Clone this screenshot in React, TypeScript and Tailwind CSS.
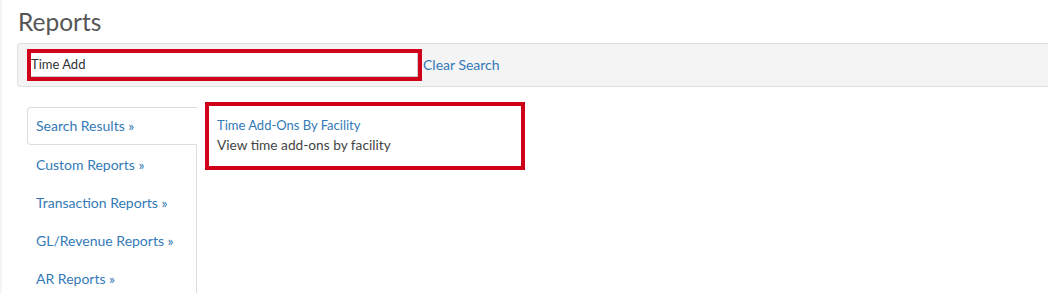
const navItems = [
  "Search Results",
  "Custom Reports",
  "Transaction Reports",
  "GL/Revenue Reports",
  "AR Reports",
];

export default function App() {
  return (
    <div className="h-[293px] overflow-hidden bg-white font-['Lato',sans-serif] text-[13px] text-[#555] shadow-[inset_3px_0_3px_-2px_rgba(0,0,0,0.08)]">
      <div className="pl-[17px]">
        {/* Title */}
        <h1 className="pt-[8px] pl-px text-[24.5px] leading-[28px] font-normal text-[#555]">Reports</h1>

        {/* Search bar */}
        <div className="mt-[7px] flex h-[44px] items-start rounded-l-[4px] border border-r-0 border-[#e0e0e0] bg-[#f4f4f4] pl-[9px] pt-[5px]">
          <div className="h-[32px] w-[395px] border-4 border-[#d0021b] bg-white">
            <div className="flex h-full items-center border-r border-b border-[#ccc] text-[13px] text-[#333]">Time Add</div>
          </div>
          <a className="mt-[8px] pl-px text-[14px] leading-[16px] text-[#337ab7]">Clear Search</a>
        </div>

        {/* Body */}
        <div className="mt-[15px] flex items-start pl-[10px]">
          <ul className="mt-[5px] flex h-[200px] w-[170px] flex-col border-r border-[#ddd] text-[14px]">
            {navItems.map((item, i) => (
              <li
                key={item}
                className={
                  i === 0
                    ? "-mr-px flex h-[38px] items-center rounded-tl-[4px] rounded-bl-[4px] border border-r-0 border-[#ddd] bg-white pl-[8px] pb-[2px] text-[#337ab7]"
                    : "flex h-[38px] items-center pl-[9px] text-[#337ab7]"
                }
              >
                {item} »
              </li>
            ))}
          </ul>
          <div className="ml-[8px] w-[320px] border-4 border-[#d0021b] px-[8px] pt-[9px] pb-[11px] leading-[20px]">
            <a className="block text-[13px] text-[#337ab7]">Time Add-Ons By Facility</a>
            <p className="text-[13.7px] text-[#444]">View time add-ons by facility</p>
          </div>
        </div>
      </div>
    </div>
  );
}
